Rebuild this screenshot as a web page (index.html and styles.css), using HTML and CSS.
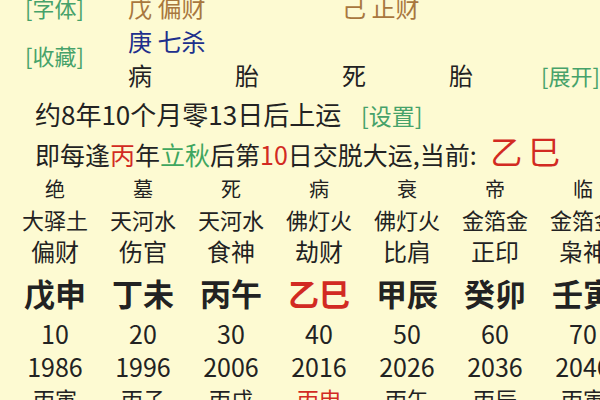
FILE: index.html
```html
<!DOCTYPE html>
<html lang="zh-CN">
<head>
    <meta charset="UTF-8">
    <meta name="viewport" content="width=device-width, initial-scale=1.0">
    <title>大运</title>
    <link rel="stylesheet" href="styles.css">
</head>
<body>
    <div class="page">
        <div class="pillars">
            <div class="side">
                <a class="link">[字体]</a>
                <a class="link fav">[收藏]</a>
            </div>
            <div class="cell brown">戊 偏财</div>
            <div class="cell"></div>
            <div class="cell brown">己 正财</div>
            <div class="cell"></div>
            <div class="cell"></div>

            <div class="cell blue">庚 七杀</div>
            <div class="cell"></div>
            <div class="cell"></div>
            <div class="cell"></div>
            <div class="cell"></div>

            <div class="cell">病</div>
            <div class="cell">胎</div>
            <div class="cell">死</div>
            <div class="cell">胎</div>
            <div class="cell"><a class="link">[展开]</a></div>
        </div>

        <p class="line">约8年10个月零13日后上运 <a class="link small">[设置]</a></p>
        <p class="line second">即每逢<span class="red">丙</span>年<span class="green">立秋</span>后第<span class="red">10</span>日交脱大运,当前: <span class="red now">乙巳</span></p>

        <div class="dayun">
            <div class="yun">
                <span class="stage">绝</span>
                <span class="nayin">大驿土</span>
                <span class="god">偏财</span>
                <span class="gz">戊申</span>
                <span class="age">10</span>
                <span class="year">1986</span>
                <span class="liu">丙寅</span>
            </div>
            <div class="yun">
                <span class="stage">墓</span>
                <span class="nayin">天河水</span>
                <span class="god">伤官</span>
                <span class="gz">丁未</span>
                <span class="age">20</span>
                <span class="year">1996</span>
                <span class="liu">丙子</span>
            </div>
            <div class="yun">
                <span class="stage">死</span>
                <span class="nayin">天河水</span>
                <span class="god">食神</span>
                <span class="gz">丙午</span>
                <span class="age">30</span>
                <span class="year">2006</span>
                <span class="liu">丙戌</span>
            </div>
            <div class="yun current">
                <span class="stage">病</span>
                <span class="nayin">佛灯火</span>
                <span class="god">劫财</span>
                <span class="gz">乙巳</span>
                <span class="age">40</span>
                <span class="year">2016</span>
                <span class="liu">丙申</span>
            </div>
            <div class="yun">
                <span class="stage">衰</span>
                <span class="nayin">佛灯火</span>
                <span class="god">比肩</span>
                <span class="gz">甲辰</span>
                <span class="age">50</span>
                <span class="year">2026</span>
                <span class="liu">丙午</span>
            </div>
            <div class="yun">
                <span class="stage">帝</span>
                <span class="nayin">金箔金</span>
                <span class="god">正印</span>
                <span class="gz">癸卯</span>
                <span class="age">60</span>
                <span class="year">2036</span>
                <span class="liu">丙辰</span>
            </div>
            <div class="yun">
                <span class="stage">临</span>
                <span class="nayin">金箔金</span>
                <span class="god">枭神</span>
                <span class="gz">壬寅</span>
                <span class="age">70</span>
                <span class="year">2046</span>
                <span class="liu">丙寅</span>
            </div>
        </div>
    </div>
</body>
</html>
```

FILE: styles.css
```css
body {
    margin: 0;
    padding: 0;
    background-color: #fdfad2;
    color: #222;
    font-family: "Noto Sans CJK SC", sans-serif;
    overflow: hidden; /* day columns run past the right edge */
    height: 400px;
}

.page {
    margin-top: -10px; /* first row is scrolled half out of view */
}

.link {
    color: #46a26a;
    cursor: pointer;
}

.red {
    color: #d22a22;
}

.green {
    color: #3fa65f;
}

.brown {
    color: #a8773e;
}

.blue {
    color: #202f8c;
}

/* hidden stems block */
.pillars {
    display: grid;
    grid-template-columns: 128px 107px 107px 107px 92px auto;
    grid-auto-rows: 34px;
    font-size: 24px;
    line-height: 34px;
}

.side {
    grid-row: 1 / span 3;
    display: flex;
    flex-direction: column;
    padding-left: 25px;
    font-size: 22px;
}

.side .fav {
    margin-top: 14px;
}

.pillars .link {
    font-size: 22px;
}

.cell {
    white-space: nowrap;
}

.line {
    margin: 2px 0 0 0;
    padding-left: 35px;
    font-size: 26px;
    line-height: 40px;
    height: 40px;
    white-space: nowrap;
}

.line.second {
    margin-top: 0;
    font-size: 25px;
}

.line .small {
    font-size: 23px;
    line-height: 1;
    margin-left: 14px;
}

.line .now {
    font-size: 32px;
    line-height: 1;
    letter-spacing: 6px;
    margin-left: 8px;
    vertical-align: 1px;
}

/* big luck columns */
.dayun {
    display: grid;
    grid-template-columns: repeat(7, 88px);
    padding-left: 11px;
    margin-top: 0;
}

.yun {
    display: flex;
    flex-direction: column;
    align-items: center;
    white-space: nowrap;
}

.stage {
    font-size: 20px;
    line-height: 30px;
}

.nayin {
    font-size: 22px;
    line-height: 30px;
}

.god {
    font-size: 24px;
    line-height: 33px;
}

.gz {
    font-size: 31px;
    font-weight: bold;
    line-height: 52px;
}

.age {
    font-size: 25px;
    line-height: 28px;
}

.year {
    font-size: 25px;
    line-height: 38px;
}

.liu {
    font-size: 22px;
    line-height: 26px;
}

.current .gz,
.current .liu {
    color: #d22a22;
}
```
